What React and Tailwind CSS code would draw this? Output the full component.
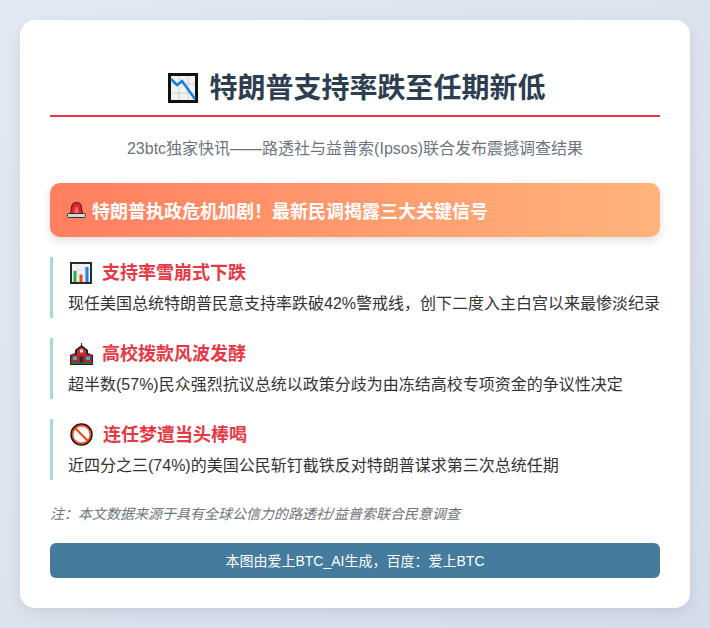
const sans = "font-['Liberation_Sans','Noto_Sans_CJK_SC',sans-serif]";

function ChartDownIcon({ className }) {
  return (
    <svg viewBox="0 0 30 30" className={className}>
      <rect x="1.500" y="1.500" width="27" height="27" fill="#f2f2f2" stroke="#111" strokeWidth="3" />
      <path d="M11 3v24M20 3v24M3 11h24M3 20h24" stroke="#cfcfcf" strokeWidth="1" />
      <path d="M3 6l6 6 5-4 13 18" fill="none" stroke="#1580d8" strokeWidth="2.500" />
    </svg>
  );
}

function ChartBarsIcon({ className }) {
  return (
    <svg viewBox="0 0 22 22" className={className}>
      <rect x="1" y="1" width="20" height="20" fill="#f4f4f4" stroke="#2a2a2a" strokeWidth="2" />
      <path d="M8 2v18M14.500 2v18M2 8h18M2 14.500h18" stroke="#dcdcdc" strokeWidth="0.700" />
      <rect x="3.500" y="9" width="3" height="11" fill="#1fb53c" />
      <rect x="9.500" y="12.500" width="3" height="7.500" fill="#f0471f" />
      <rect x="15.500" y="5" width="3" height="15" fill="#1a86e0" />
    </svg>
  );
}

function SchoolIcon({ className }) {
  return (
    <svg viewBox="0 0 23 22" className={className}>
      <path d="M11.500 0v3" stroke="#222" strokeWidth="1" />
      <path d="M5 10V7l6.500-5L18 7v3l5 2v10H0V12z" fill="#222" />
      <path d="M7 10V7.500l4.500-3.500L16 7.500V12H7z" fill="#c92f35" />
      <circle cx="11.500" cy="8" r="1.800" fill="#f3e2d2" />
      <rect x="1.200" y="11.500" width="20.600" height="8" fill="#b3272d" />
      <rect x="3" y="13.500" width="4" height="3.500" fill="#2fb6d8" />
      <rect x="16" y="13.500" width="4" height="3.500" fill="#2fb6d8" />
      <rect x="9.800" y="13.500" width="3.400" height="6" fill="#2a2a2a" />
      <rect x="0.500" y="19.500" width="22" height="1.200" fill="#2d8a4a" />
    </svg>
  );
}

function NoEntryIcon({ className }) {
  return (
    <svg viewBox="0 0 23 23" className={className}>
      <circle cx="11.500" cy="11.500" r="11.200" fill="#141414" />
      <circle cx="11.500" cy="11.500" r="9" fill="#fff" stroke="#ee4a1e" strokeWidth="1.800" />
      <path d="M5.200 5.200l12.600 12.600" stroke="#ee4a1e" strokeWidth="2.200" />
    </svg>
  );
}

function SirenIcon({ className }) {
  return (
    <svg viewBox="0 0 19 16" className={className}>
      <path d="M3.500 12L5 3q.5-2.500 4.500-2.500T14 3l1.500 9z" fill="#e3242b" stroke="#3a2222" strokeWidth="1" />
      <path d="M7 11l1.500-6h2l1.500 6z" fill="#ff6b6b" />
      <rect x="0.500" y="11.500" width="18" height="4" rx="1" fill="#d8d8d8" stroke="#333" strokeWidth="1" />
    </svg>
  );
}

const points = [
  {
    icon: <ChartBarsIcon className="w-[22px] h-[22px] shrink-0 ml-[2px] mr-[10px]" />,
    title: "支持率雪崩式下跌",
    text: "现任美国总统特朗普民意支持率跌破42%警戒线，创下二度入主白宫以来最惨淡纪录",
  },
  {
    icon: <SchoolIcon className="w-[23px] h-[22px] shrink-0 ml-[2px] mr-[9px]" />,
    title: "高校拨款风波发酵",
    text: "超半数(57%)民众强烈抗议总统以政策分歧为由冻结高校专项资金的争议性决定",
  },
  {
    icon: <NoEntryIcon className="w-[23px] h-[23px] shrink-0 ml-[2px] mr-[10px]" />,
    title: "连任梦遭当头棒喝",
    text: "近四分之三(74%)的美国公民斩钉截铁反对特朗普谋求第三次总统任期",
  },
];

export default function App() {
  return (
    <div className={`${sans} w-[710px] h-[628px] bg-gradient-to-br from-[#e3e9f3] to-[#d5dcea] p-5`}>
      <div className="h-[588px] bg-white rounded-[15px] shadow-[0_5px_15px_rgba(0,0,0,0.08)] px-[30px] pt-[50px]">
        <h1 className="flex items-center justify-center gap-[11px] h-[47px] border-b-2 border-[#e63946] pb-[7px] pl-[4px] text-[#2c3e50] text-[28px] font-bold">
          <ChartDownIcon className="w-[30px] h-[30px] shrink-0 mb-[2px]" />
          <span className="leading-none">特朗普支持率跌至任期新低</span>
        </h1>
        <p className="mt-[20px] text-center text-[#6c757d] text-base leading-[24px]">
          23btc独家快讯——路透社与益普索(Ipsos)联合发布震撼调查结果
        </p>
        <div className="mt-[22px] h-[54px] rounded-[10px] bg-gradient-to-r from-[#ff7e5f] to-[#feb47b] shadow-[0_4px_10px_rgba(0,0,0,0.12)] pl-[17px] flex items-center gap-[6px] text-white text-lg font-bold">
          <SirenIcon className="w-[19px] h-[16px] shrink-0" />
          <span className="pt-[3px]">特朗普执政危机加剧！最新民调揭露三大关键信号</span>
        </div>
        <div className="mt-[20px] flex flex-col gap-[20px]">
          {points.map((p) => (
            <div key={p.title} className="h-[61px] border-l-[3px] border-[#a8dadc] pl-[15px]">
              <div className="flex items-center h-[31px] text-[#e63946] text-lg font-bold">
                {p.icon}
                <span>{p.title}</span>
              </div>
              <p className="mt-[5px] text-[#333] text-base leading-[22px] whitespace-nowrap">{p.text}</p>
            </div>
          ))}
        </div>
        <p className="mt-[24px] text-[#6c757d] text-sm italic leading-[20px]">
          注：本文数据来源于具有全球公信力的路透社/益普索联合民意调查
        </p>
        <div className="mt-[19px] h-[35px] rounded-[6px] bg-[#457b9d] text-white text-sm flex items-center justify-center">
          本图由爱上BTC_AI生成，百度：爱上BTC
        </div>
      </div>
    </div>
  );
}
